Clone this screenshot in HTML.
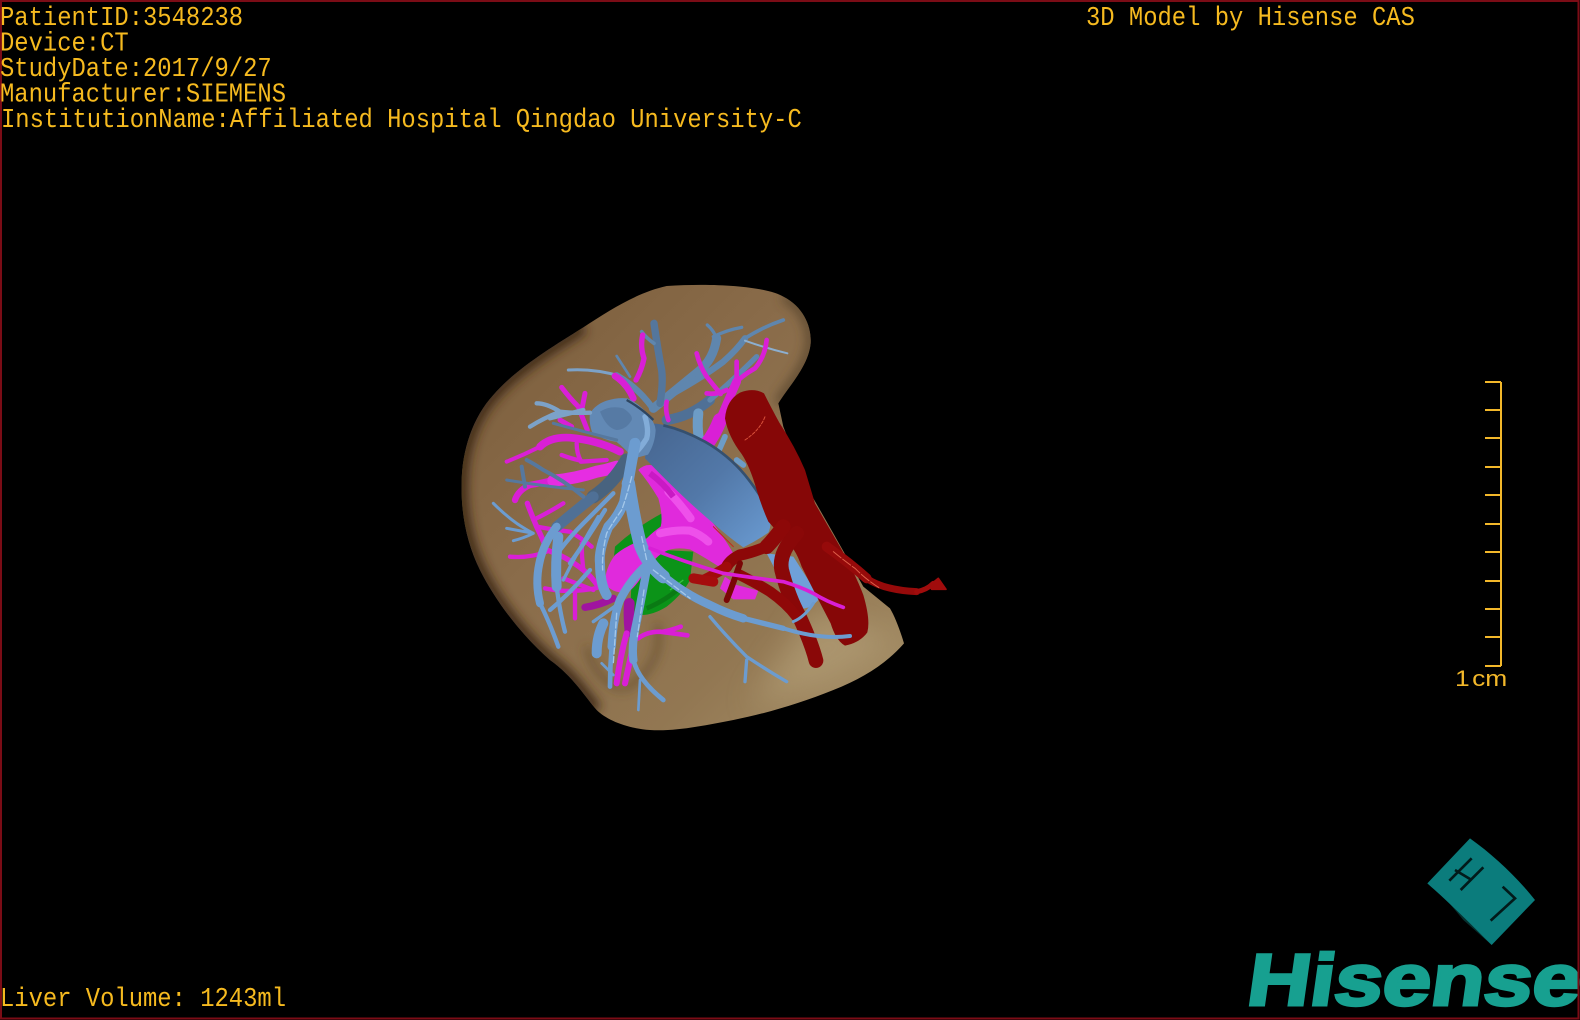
<!DOCTYPE html>
<html><head><meta charset="utf-8"><style>
html,body{margin:0;padding:0;background:#000;width:1580px;height:1020px;overflow:hidden}
svg{display:block}
.t{font-family:"Liberation Mono",monospace;font-size:26.5px;fill:#f6ba1f}
</style></head><body>
<svg width="1580" height="1020" viewBox="0 0 1580 1020" xmlns="http://www.w3.org/2000/svg">
<defs>
<linearGradient id="lv" x1="0" y1="0" x2="1" y2="1"><stop offset="0" stop-color="#7a5c3a"/><stop offset=".4" stop-color="#8a6c4a"/><stop offset=".72" stop-color="#927752"/><stop offset="1" stop-color="#a8926a"/></linearGradient>
<linearGradient id="ivc" x1="0" y1="0" x2="1" y2="1"><stop offset="0" stop-color="#46658f"/><stop offset=".5" stop-color="#5278a8"/><stop offset="1" stop-color="#6a9bd2"/></linearGradient>
<filter id="b1" x="-30%" y="-30%" width="160%" height="160%"><feGaussianBlur stdDeviation="16"/></filter>
<filter id="b2" x="-30%" y="-30%" width="160%" height="160%"><feGaussianBlur stdDeviation="45"/></filter>
<clipPath id="lc"><path d="M650 48C800 38 950 50 1000 80C1060 110 1085 170 1082 220C1075 290 1015 350 985 400L1000 470L1070 650L1150 790L1240 950L1320 1015C1335 1040 1350 1080 1362 1120C1310 1180 1240 1225 1150 1260C1050 1300 950 1330 850 1350C770 1365 680 1385 600 1380C530 1375 470 1350 440 1320C405 1280 370 1220 300 1170C220 1100 140 1000 90 900C55 830 32 740 35 640C35 540 70 440 130 375C200 295 300 235 400 172C480 120 560 68 650 48Z"/></clipPath>
</defs>
<rect width="1580" height="1020" fill="#000"/>
<path d="M1 1H1578.5V1018.5H1Z" fill="none" stroke="#7b0c16" stroke-width="2"/>

<text class="t" transform="translate(0 25) scale(.9 1)">PatientID:3548238</text>
<text class="t" transform="translate(0 50.500) scale(.9 1)">Device:CT</text>
<text class="t" transform="translate(0 76) scale(.9 1)">StudyDate:2017/9/27</text>
<text class="t" transform="translate(0 101.500) scale(.9 1)">Manufacturer:SIEMENS</text>
<text class="t" transform="translate(1 127) scale(.9 1)">InstitutionName:Affiliated Hospital Qingdao University-C</text>
<text class="t" transform="translate(1086 25) scale(.9 1)">3D Model by Hisense CAS</text>
<text class="t" transform="translate(0 1006) scale(.9 1)">Liver Volume: 1243ml</text>

<g transform="translate(450 270) scale(.33333)">
<path d="M650 48C800 38 950 50 1000 80C1060 110 1085 170 1082 220C1075 290 1015 350 985 400L1000 470L1070 650L1150 790L1240 950L1320 1015C1335 1040 1350 1080 1362 1120C1310 1180 1240 1225 1150 1260C1050 1300 950 1330 850 1350C770 1365 680 1385 600 1380C530 1375 470 1350 440 1320C405 1280 370 1220 300 1170C220 1100 140 1000 90 900C55 830 32 740 35 640C35 540 70 440 130 375C200 295 300 235 400 172C480 120 560 68 650 48Z" fill="url(#lv)"/>
<g clip-path="url(#lc)">
<path d="M1000 80C1060 110 1085 170 1082 220C1075 290 1015 350 985 400" fill="none" stroke="#5a462e" stroke-width="26" filter="url(#b1)"/>
<path d="M440 1320C405 1280 370 1220 300 1170C220 1100 140 1000 90 900C55 830 32 740 35 640C35 540 70 440 130 375C200 295 300 235 400 172" fill="none" stroke="#3a2814" stroke-width="36" filter="url(#b1)"/>
<path d="M620 1060C640 1130 610 1210 520 1260M410 1130C430 1190 440 1220 510 1260" fill="none" stroke="#5a4428" stroke-width="12" filter="url(#b1)"/>
<path d="M1100 1010L1340 1110L1150 1240L900 1310Z" fill="#b8a47d" opacity=".55" filter="url(#b2)"/>
</g>

<!-- green -->
<path d="M495 830Q560 770 640 728L665 752Q600 800 560 830L490 880Z" fill="#0b9318"/>
<path d="M545 930Q600 890 640 840L730 845L720 930Q700 970 650 1010Q610 1035 575 1035L540 1030Z" fill="#0b9318"/>
<path d="M590 1015Q650 990 700 945" stroke="#0a7a14" stroke-width="14" fill="none"/>
<path d="M660 960L700 930" stroke="#38c040" stroke-width="4" fill="none"/>

<!-- upper blue branches -->
<g fill="none" stroke-linecap="round" stroke-linejoin="round" stroke="#5f86ae">
<path d="M610 415Q690 350 745 305Q790 270 800 205" stroke-width="27"/>
<path d="M670 370Q760 320 820 275Q860 240 885 205" stroke-width="19"/>
<path d="M885 205Q940 170 1000 150" stroke-width="11"/>
<path d="M885 212Q950 235 1012 250" stroke="#8cafd0" stroke-width="6"/>
<path d="M790 200Q830 180 875 172M800 205Q790 180 772 165" stroke-width="10"/>
<path d="M630 400Q640 340 635 300Q625 250 612 160" stroke="#54769c" stroke-width="22"/>
<path d="M612 220Q590 205 575 185" stroke-width="11"/>
<path d="M500 258L540 320" stroke-width="8"/>
<path d="M355 300Q430 295 510 318" stroke="#7ca2c8" stroke-width="9"/>
<path d="M500 316Q560 350 605 410" stroke-width="19"/>
<path d="M650 450Q720 440 780 390" stroke="#4f7096" stroke-width="30"/>
<path d="M780 390Q860 320 920 260" stroke="#5f86ae" stroke-width="16"/>
<path d="M745 430Q740 470 748 515" stroke="#6d9cc6" stroke-width="30"/>
<path d="M825 500L805 545M860 570L880 585" stroke="#6d9cc6" stroke-width="17"/>
</g>

<!-- magenta branches -->
<g fill="none" stroke="#d91fd6" stroke-linecap="round" stroke-linejoin="round">
<path d="M578 195Q570 230 582 265Q575 300 558 330" stroke-width="16"/>
<path d="M495 318Q530 340 550 385" stroke-width="20"/>
<path d="M950 210Q945 260 915 295Q880 315 860 335" stroke-width="14"/>
<path d="M860 335Q835 390 810 450" stroke-width="26"/>
<path d="M810 450Q795 490 768 525" stroke-width="42"/>
<path d="M860 275L860 335M740 250Q750 290 770 320Q790 345 812 372M650 395Q645 420 655 450M770 370Q800 375 830 360" stroke-width="14"/>
<path d="M335 352Q360 385 385 410Q400 450 412 480M405 370L395 420M330 450L365 470" stroke-width="15"/>
<path d="M170 575Q220 555 270 530" stroke-width="12"/>
<path d="M270 530Q300 500 360 503Q440 510 510 545" stroke-width="23"/>
<path d="M380 520Q380 550 392 572Q360 565 335 555M392 575L470 570" stroke-width="13"/>
<path d="M195 690Q205 660 240 645Q270 640 310 630" stroke-width="19"/>
<path d="M310 632Q380 625 440 605Q470 600 500 590" stroke="#e62de2" stroke-width="36"/>
<path d="M232 700Q245 735 260 770Q280 810 290 840Q350 860 400 900Q425 920 445 950" stroke-width="16"/>
<path d="M180 860Q240 865 290 845M260 770Q310 780 360 785Q395 805 425 830M250 750Q300 725 340 700M395 820Q395 860 400 900" stroke-width="13"/>
<path d="M285 955Q330 965 380 962Q420 960 455 950M375 1045L375 955M340 925L430 960" stroke-width="13"/>
<path d="M405 1012Q450 1005 490 985" stroke="#a014a0" stroke-width="22"/>
<path d="M538 1000Q535 1040 540 1085" stroke="#a014a0" stroke-width="32"/>
<path d="M565 1105Q590 1085 630 1085Q670 1090 712 1096M640 1085Q665 1080 692 1070" stroke-width="14"/>
<path d="M500 1240Q510 1160 530 1090M525 1240Q540 1170 552 1115" stroke-width="18"/>
</g>

<!-- large magenta portal vein -->
<path d="M565 600Q590 575 625 592Q685 635 770 735Q815 790 850 850L822 900Q770 865 720 838Q670 830 645 845Q615 860 585 905Q555 955 530 968Q485 970 465 940Q465 895 495 855Q530 825 590 805Q610 785 632 770Q640 740 625 685Q595 635 565 600Z" fill="#e02adc"/>
<path d="M655 665Q685 695 722 745M630 790Q680 778 720 782Q750 792 775 815" stroke="#ee50ea" stroke-width="24" fill="none" stroke-linecap="round"/>
<path d="M600 610Q640 640 670 680" stroke="#c81ac4" stroke-width="18" fill="none"/>
<path d="M825 920L860 945L925 962L915 988L850 988L810 955Z" fill="#e02adc"/>

<!-- IVC blue -->
<path d="M600 460Q680 462 765 515Q835 555 885 615Q935 675 955 725Q968 760 955 788Q920 812 880 832Q840 805 790 760Q700 685 585 565Z" fill="url(#ivc)"/>
<path d="M640 466Q700 480 765 515Q835 555 885 615Q925 665 950 710" stroke="#35506f" stroke-width="8" fill="none"/>
<path d="M950 850L1030 860L1110 985L1085 1010L1045 1020L1000 945Z" fill="#6fa0d8"/>

<!-- hub -->
<path d="M420 430Q437 403 470 392Q500 382 532 385Q570 402 590 430Q615 455 617 480Q615 522 594 554L550 566Q525 535 500 516Q458 510 426 486Q416 456 420 430Z" fill="#6289b5"/>
<path d="M450 425Q480 405 520 415Q550 435 545 450Q530 478 500 480Q470 475 450 425Z" fill="#567aa4"/>
<path d="M585 440Q597 480 590 505Q575 530 555 550" stroke="#82acd8" stroke-width="16" fill="none" stroke-linecap="round"/>
<path d="M530 390Q575 415 610 450" stroke="#2e4560" stroke-width="7" fill="none"/>

<!-- lower blue vessels -->
<g fill="none" stroke-linecap="round" stroke-linejoin="round">
<g stroke="#56789e">
<path d="M530 570Q490 640 430 680" stroke="#48637f" stroke-width="40"/>
<path d="M430 680Q380 720 320 770" stroke="#4f7096" stroke-width="32"/>
<path d="M400 680Q340 630 280 600Q250 580 230 570M215 590L225 650" stroke-width="12"/>
<path d="M400 660Q290 650 170 630" stroke-width="9"/>
<path d="M420 428Q370 430 330 425Q290 400 260 400M330 425Q280 445 240 470M400 420Q340 435 300 445" stroke="#7ca2c8" stroke-width="13"/>
<path d="M500 510Q420 490 310 460" stroke-width="9"/>
</g>
<g stroke="#6c9cd0">
<path d="M320 770Q280 820 268 880Q255 940 270 1000" stroke-width="24"/>
<path d="M270 1000Q300 1060 325 1130" stroke-width="13"/>
<path d="M325 800Q315 880 320 950" stroke-width="30"/>
<path d="M320 950Q330 1030 345 1085" stroke-width="13"/>
<path d="M130 700Q165 735 200 760Q230 780 250 790Q220 805 190 812M250 790L170 775" stroke-width="9"/>
<path d="M490 670Q440 720 400 760Q360 800 330 840M465 720Q410 810 360 880M420 900Q360 970 300 1020" stroke-width="13"/>
<path d="M445 740Q390 830 340 930" stroke-width="10"/>
<path d="M555 520Q540 600 525 690" stroke-width="33"/>
<path d="M525 690Q505 740 475 770Q445 840 450 880Q450 940 470 975" stroke-width="30"/>
<path d="M535 640Q550 740 570 820Q590 880 640 920" stroke-width="40"/>
<path d="M630 910Q700 970 780 1005Q830 1030 880 1045" stroke-width="25"/>
<path d="M880 1045Q940 1060 1000 1075" stroke-width="16"/>
<path d="M590 885Q540 930 510 990Q490 1040 485 1130" stroke-width="25"/>
<path d="M485 1130Q480 1190 480 1250" stroke-width="14"/>
<path d="M590 900Q570 1010 555 1080Q545 1130 550 1170" stroke-width="25"/>
<path d="M550 1170Q565 1230 640 1290" stroke-width="14"/>
<path d="M570 1230L565 1320M455 1180L490 1215" stroke-width="8"/>
<path d="M460 1060Q440 1100 440 1150" stroke-width="30"/>
<path d="M430 1055L500 1005" stroke-width="10"/>
<path d="M780 1040Q830 1100 890 1160Q950 1200 1010 1235M890 1170L885 1235" stroke-width="10"/>
</g>
<path d="M545 620Q530 680 515 720Q480 770 470 790Q455 850 458 900M575 800L590 870M610 900L720 985M500 1030L490 1180M582 960L562 1100" stroke="#a4c8ea" stroke-width="4" stroke-dasharray="18 8"/>
</g>

<!-- red -->
<path d="M825 445Q830 390 870 368Q910 352 942 370Q962 410 988 458Q1035 530 1065 600Q1080 650 1095 700Q1135 770 1170 830Q1215 910 1240 975Q1262 1050 1252 1087Q1230 1118 1185 1127Q1158 1112 1142 1060Q1105 990 1055 890Q1035 830 1000 805L955 755Q935 710 920 660Q900 590 875 552Q835 500 825 445Z" fill="#860707"/>
<g fill="none" stroke-linecap="round" stroke-linejoin="round">
<path d="M1040 790Q985 850 995 900Q1015 980 1048 1040Q1085 1120 1098 1172" stroke="#8a0808" stroke-width="44"/>
<path d="M1000 770Q970 810 950 830" stroke="#8d0808" stroke-width="44"/>
<path d="M950 830Q900 850 870 855Q840 870 830 890" stroke="#8d0808" stroke-width="34"/>
<path d="M830 890Q800 910 760 930" stroke="#a00b0b" stroke-width="30"/>
<path d="M730 925Q760 930 790 935" stroke="#a50d0d" stroke-width="30"/>
<path d="M1130 830Q1200 880 1250 925" stroke="#960a0a" stroke-width="30"/>
<path d="M1250 925Q1300 960 1400 965" stroke="#960a0a" stroke-width="21"/>
<path d="M1400 965Q1430 960 1450 940" stroke="#a00c0c" stroke-width="15"/>
<path d="M1440 945L1465 925L1488 958L1445 958Z" stroke="#a00c0c" stroke-width="5" fill="#a00c0c"/>
<path d="M870 915Q920 940 960 965Q1010 1000 1040 1040" stroke="#8f0808" stroke-width="32"/>
<path d="M870 880Q850 940 830 990" stroke="#7a0606" stroke-width="18"/>
<path d="M1150 845Q1180 870 1215 895Q1250 930 1290 955" stroke="#e0604a" stroke-width="3" stroke-dasharray="30 6"/>
<path d="M885 510Q930 480 945 440" stroke="#d8503a" stroke-width="3" stroke-dasharray="9 5"/>
<path d="M790 770L850 830" stroke="#c02a1a" stroke-width="3"/>
<!-- front thin vessels -->
<path d="M600 835Q700 875 820 910Q920 925 1000 935Q1050 950 1090 970Q1130 995 1180 1012" stroke="#d91fd6" stroke-width="11"/>
<path d="M1030 1055Q1065 1040 1090 1000" stroke="#6c9cd0" stroke-width="9"/>
<path d="M1000 1075Q1110 1110 1200 1098" stroke="#6c9cd0" stroke-width="12"/>
</g>
</g>

<!-- scale bar -->
<g stroke="#f3b82a" stroke-width="2" fill="none">
<path d="M1501 382V666"/>
<path d="M1485 382H1501M1485 410H1501M1485 438H1501M1485 467H1501M1485 495H1501M1485 524H1501M1485 552H1501M1485 581H1501M1485 609H1501M1485 637H1501M1485 666H1501"/>
</g>
<text transform="translate(1455 686) scale(1.2 1)" font-family="'Liberation Sans',sans-serif" font-size="22" fill="#f3b82a">1<tspan dx="2">cm</tspan></text>

<!-- logo cube -->
<g transform="translate(1230 820) scale(.33333)">
<path d="M592 190L650 240L700 300L785 375L760 330L700 270Z" fill="#06302f"/>
<path d="M720 55C790 105 860 170 915 240L785 375C720 310 660 250 592 190Z" fill="#0b7c7c"/>
<g fill="none" stroke="#021a1a" stroke-width="8">
<path d="M658 182L725 115M692 210L760 142M675 150L725 180"/>
<path d="M818 200L855 235L782 302"/>
</g>
</g>
<text transform="translate(1245 1005) skewX(-8) scale(1.19 1)" font-family="'Liberation Sans',sans-serif" font-weight="700" font-size="73" fill="#17a090" stroke="#17a090" stroke-width="3">Hisense</text>
<path d="M1578.5 950V1019" stroke="#7b0c16" stroke-width="2"/>
<path d="M1200 1018.500H1579" stroke="#7b0c16" stroke-width="2"/>
</svg>
</body></html>
